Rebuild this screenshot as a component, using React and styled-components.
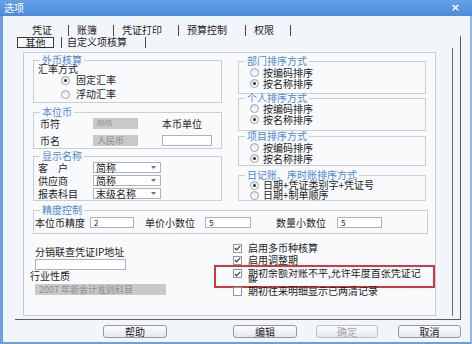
import React from 'react';
import styled, { createGlobalStyle } from 'styled-components';

const Global = createGlobalStyle`
  html, body { margin: 0; padding: 0; background: #ffffff; }
  body {
    font-family: "Noto Sans CJK SC", "Noto Sans", sans-serif;
    font-size: 10px;
    color: #1c1c1c;
  }
  * { box-sizing: border-box; }
`;

const Window = styled.div`
  width: 472px;
  height: 344px;
  display: flex;
  flex-direction: column;
  overflow: hidden;
`;

const TitleBar = styled.div`
  height: 16px;
  flex: none;
  display: flex;
  align-items: center;
  justify-content: space-between;
  padding: 0 12px 0 4px;
  background: linear-gradient(#64a1e6, #4a8ad9);
  color: #ffffff;
`;

const Title = styled.span`
  font-size: 10px;
  line-height: 10px;
`;

const Close = styled.span`
  font-family: "DejaVu Sans", sans-serif;
  font-size: 11px;
  font-weight: bold;
  line-height: 10px;
`;

const Body = styled.div`
  flex: 1;
  display: flex;
  flex-direction: column;
  background: #f2f5fa;
  border-left: 3px solid #6e9fdb;
  border-right: 2px solid #93b8e6;
  border-bottom: 2px solid #6e9fdb;
  padding-top: 8px;
`;

const TabRow = styled.div`
  display: flex;
  align-items: center;
  height: 12px;
  padding-left: ${p => p.$pl}px;
`;

const Tab = styled.span`
  padding: 0 ${p => p.$pr ?? 16}px 0 ${p => p.$pl ?? 8}px;
  line-height: 12px;
  white-space: nowrap;
`;

const TabSep = styled.span`
  width: 1px;
  height: 11px;
  background: #4a4a4a;
  margin-left: ${p => p.$ml || 0}px;
`;

const ActiveTab = styled.span`
  width: 37px;
  height: 11px;
  border: 1px solid #3c3c3c;
  background: #f8f9fb;
  display: flex;
  align-items: center;
  justify-content: center;
  line-height: 9px;
`;

const OuterPage = styled.div`
  margin-left: 12px;
  width: 446px;
  display: flex;
  flex-direction: column;
  border-right: 1px solid #5d5d5d;
  border-bottom: 1px solid #5d5d5d;
  padding: 0 7px 3px 0;
`;

const InnerPage = styled.div`
  border-right: 1px solid #6a6a6a;
  padding: 4px 16px 0 8px;
`;

const Panel = styled.div`
  height: 264px;
  border: 1px solid #c6ccd5;
  background: #f8fafc;
  padding-top: 1px;
  display: flex;
  flex-direction: column;
`;

const TopGrid = styled.div`
  display: grid;
  grid-template-columns: 189px 188px;
  column-gap: 16px;
  padding-left: 9px;
  align-items: start;
`;

const Column = styled.div`
  display: flex;
  flex-direction: column;
`;

const Group = styled.fieldset`
  margin: ${p => p.$mt || 0}px 0 0 ${p => p.$ml || 0}px;
  padding: 0 0 ${p => p.$pb || 0}px 0;
  border: 1px solid #c9ced6;
  min-width: 0;
`;

const Legend = styled.legend`
  padding: 0 2px;
  margin-left: 6px;
  font-size: 10px;
  line-height: 8px;
  color: #4f87d2;
`;

const PlainLine = styled.div`
  height: ${p => p.$h}px;
  line-height: ${p => p.$h}px;
  margin-top: ${p => p.$mt || 0}px;
  padding-left: ${p => p.$pl || 0}px;
  white-space: nowrap;
`;

const RadioRow = styled.div`
  display: flex;
  align-items: center;
  height: ${p => p.$h || 11}px;
  margin-top: ${p => p.$mt || 0}px;
  padding-left: ${p => p.$pl}px;
  gap: ${p => p.$gap || 4}px;
  white-space: nowrap;
  line-height: 10px;
`;

const Radio = styled.span`
  width: 9px;
  height: 9px;
  flex: none;
  border-radius: 50%;
  border: 1px solid #9aa4af;
  background: linear-gradient(#e3e7eb, #ffffff);
  display: flex;
  align-items: center;
  justify-content: center;
  &::after {
    content: '';
    width: 3px;
    height: 3px;
    border-radius: 50%;
    background: ${p => (p.$on ? '#2d3035' : 'transparent')};
  }
`;

const FieldRow = styled.div`
  display: flex;
  align-items: center;
  height: 11px;
  margin-top: ${p => p.$mt || 0}px;
  white-space: nowrap;
`;

const Label = styled.span`
  width: ${p => p.$w}px;
  flex: none;
  padding-left: ${p => p.$pl || 0}px;
  margin-left: ${p => p.$ml || 0}px;
  line-height: 11px;
`;

const GrayBox = styled.span`
  width: ${p => p.$w}px;
  height: 11px;
  flex: none;
  background: #c9c9c9;
  color: #8d8d8d;
  font-size: ${p => p.$fs || 9}px;
  line-height: 11px;
  padding-left: 4px;
  margin-left: ${p => p.$ml || 0}px;
  overflow: hidden;
  white-space: nowrap;
`;

const WhiteBox = styled.span`
  width: ${p => p.$w}px;
  height: 11px;
  flex: none;
  background: #ffffff;
  border: 1px solid #a9b2bd;
  font-size: 8px;
  line-height: 9px;
  padding-left: 3px;
  margin-left: ${p => p.$ml || 0}px;
`;

const SelectBox = styled.span`
  width: 68px;
  height: 11px;
  flex: none;
  background: #ffffff;
  border: 1px solid #aab3be;
  display: flex;
  align-items: center;
  justify-content: space-between;
  padding: 0 4px 0 2px;
  line-height: 9px;
`;

const PrecisionGroup = styled(Group)`
  margin-left: 9px;
  width: 395px;
`;

const BottomGrid = styled.div`
  display: grid;
  grid-template-columns: 209px 1fr;
  align-items: start;
`;

const Stack = styled.div`
  display: flex;
  flex-direction: column;
`;

const CheckRow = styled.div`
  position: relative;
  display: flex;
  align-items: ${p => (p.$wrap ? 'flex-start' : 'center')};
  height: ${p => p.$h || 12}px;
  margin-top: ${p => p.$mt || 0}px;
  gap: 6px;
  ${p =>
    p.$mark &&
    `
    &::after {
      content: '';
      position: absolute;
      left: -19px;
      top: -4px;
      width: 217px;
      height: 19px;
      border: 2px solid #d1393f;
      pointer-events: none;
    }
  `}
`;

const CheckBox = styled.span`
  width: 9px;
  height: 9px;
  flex: none;
  border: 1px solid #8f99a4;
  background: #ffffff;
  display: flex;
  align-items: center;
  justify-content: center;
`;

const CheckLabel = styled.span`
  line-height: 10px;
  white-space: nowrap;
`;

const WrapLabel = styled.span`
  line-height: 8px;
  width: 178px;
  height: 14px;
  overflow: hidden;
  word-break: break-all;
`;

const ButtonRow = styled.div`
  display: flex;
  margin-top: 5px;
  padding-left: 100px;
`;

const Button = styled.div`
  width: ${p => p.$w}px;
  height: 13px;
  margin-left: ${p => p.$ml || 0}px;
  border: 1px solid ${p => (p.$disabled ? '#b7c0ca' : '#8e9aa8')};
  border-radius: 3px;
  background: linear-gradient(#fcfcfc, #e5e8ec);
  color: ${p => (p.$disabled ? '#a4a8ad' : '#1c1c1c')};
  display: flex;
  align-items: center;
  justify-content: center;
  line-height: 11px;
`;

const Arrow = () => (
  <svg width="5" height="3" viewBox="0 0 5 3">
    <path d="M0 0 L5 0 L2.5 3 Z" fill="#6d737a" />
  </svg>
);

const Tick = () => (
  <svg width="7" height="6" viewBox="0 0 7 6">
    <path d="M0.8 3 L2.7 4.8 L6.2 0.9" fill="none" stroke="#3a3f45" strokeWidth="1.2" />
  </svg>
);

const Check = ({ on, wrap, children, ...rest }) => (
  <CheckRow $wrap={wrap} {...rest}>
    <CheckBox>{on && <Tick />}</CheckBox>
    {wrap ? <WrapLabel>{children}</WrapLabel> : <CheckLabel>{children}</CheckLabel>}
  </CheckRow>
);

const Select = ({ value }) => (
  <SelectBox>
    <span>{value}</span>
    <Arrow />
  </SelectBox>
);

const SortGroup = ({ title, first, second, on, mt, pb, rmt, h }) => (
  <Group $mt={mt} $pb={pb}>
    <Legend>{title}</Legend>
    <RadioRow $mt={rmt} $h={h} $pl={11}>
      <Radio $on={on === 0} />
      <span>{first}</span>
    </RadioRow>
    <RadioRow $h={h} $pl={11}>
      <Radio $on={on === 1} />
      <span>{second}</span>
    </RadioRow>
  </Group>
);

export default function App() {
  return (
    <>
      <Global />
      <Window>
        <TitleBar>
          <Title>选项</Title>
          <Close>×</Close>
        </TitleBar>
        <Body>
          <TabRow $pl={21}>
            <Tab>凭证</Tab>
            <TabSep />
            <Tab>账簿</Tab>
            <TabSep />
            <Tab>凭证打印</Tab>
            <TabSep />
            <Tab $pr={18}>预算控制</Tab>
            <TabSep />
            <Tab>权限</Tab>
            <TabSep />
          </TabRow>
          <OuterPage>
            <TabRow $pl={2}>
              <ActiveTab>其他</ActiveTab>
              <TabSep $ml={7} />
              <Tab $pl={5} $pr={18}>自定义项核算</Tab>
              <TabSep />
            </TabRow>
            <InnerPage>
              <Panel>
                <TopGrid>
                  <Column>
                    <Group $mt={2} $pb={2}>
                      <Legend>外币核算</Legend>
                      <PlainLine $h={9} $pl={4}>汇率方式</PlainLine>
                      <RadioRow $mt={1} $h={12} $pl={27} $gap={6}>
                        <Radio $on />
                        <span>固定汇率</span>
                      </RadioRow>
                      <RadioRow $mt={2} $h={12} $pl={27} $gap={6}>
                        <Radio />
                        <span>浮动汇率</span>
                      </RadioRow>
                    </Group>
                    <Group $mt={5} $pb={2}>
                      <Legend>本位币</Legend>
                      <FieldRow $mt={2}>
                        <Label $w={59} $pl={6}>币符</Label>
                        <GrayBox $w={45} $fs={7}>RMB</GrayBox>
                        <Label $w={50} $ml={24}>本币单位</Label>
                      </FieldRow>
                      <FieldRow $mt={6}>
                        <Label $w={59} $pl={6}>币名</Label>
                        <GrayBox $w={45}>人民币</GrayBox>
                        <WhiteBox $w={50} $ml={24} />
                      </FieldRow>
                    </Group>
                    <Group $mt={3} $pb={1}>
                      <Legend>显示名称</Legend>
                      <FieldRow $mt={2}>
                        <Label $w={59} $pl={4}>客　户</Label>
                        <Select value="简称" />
                      </FieldRow>
                      <FieldRow $mt={2}>
                        <Label $w={59} $pl={4}>供应商</Label>
                        <Select value="简称" />
                      </FieldRow>
                      <FieldRow $mt={2}>
                        <Label $w={59} $pl={4}>报表科目</Label>
                        <Select value="末级名称" />
                      </FieldRow>
                    </Group>
                  </Column>
                  <Column>
                    <SortGroup title="部门排序方式" first="按编码排序" second="按名称排序" on={1} mt={3} pb={4} rmt={2} />
                    <SortGroup title="个人排序方式" first="按编码排序" second="按名称排序" on={1} mt={0} pb={5} rmt={1} />
                    <SortGroup title="项目排序方式" first="按编码排序" second="按名称排序" on={1} mt={1} pb={1} rmt={2} />
                    <SortGroup
                      title="日记账、序时账排序方式"
                      first="日期+凭证类别字+凭证号"
                      second="日期+制单顺序"
                      on={0}
                      mt={5}
                      pb={0}
                      rmt={1}
                      h={10}
                    />
                  </Column>
                </TopGrid>
                <PrecisionGroup $mt={5} $pb={5}>
                  <Legend>精度控制</Legend>
                  <FieldRow $mt={3}>
                    <Label $w={56} $pl={1}>本位币精度</Label>
                    <WhiteBox $w={44}>2</WhiteBox>
                    <Label $w={60} $ml={11}>单价小数位</Label>
                    <WhiteBox $w={46}>5</WhiteBox>
                    <Label $w={61} $ml={25}>数量小数位</Label>
                    <WhiteBox $w={45}>5</WhiteBox>
                  </FieldRow>
                </PrecisionGroup>
                <BottomGrid>
                  <Stack>
                    <PlainLine $h={12} $mt={12} $pl={11}>分销联查凭证IP地址</PlainLine>
                    <FieldRow $mt={1}>
                      <WhiteBox $w={91} $ml={11} />
                    </FieldRow>
                    <PlainLine $h={10} $mt={1} $pl={6}>行业性质</PlainLine>
                    <FieldRow $mt={3}>
                      <GrayBox $w={131} $ml={11}>2007 年新会计准则科目</GrayBox>
                    </FieldRow>
                  </Stack>
                  <Stack>
                    <Check on $mt={8}>启用多币种核算</Check>
                    <Check on>启用调整期</Check>
                    <Check on wrap $mt={3} $h={14} $mark>
                      期初余额对账不平,允许年度首张凭证记账
                    </Check>
                    <Check $mt={2}>期初往来明细显示已两清记录</Check>
                  </Stack>
                </BottomGrid>
              </Panel>
            </InnerPage>
          </OuterPage>
          <ButtonRow>
            <Button $w={64}>帮助</Button>
            <Button $w={64} $ml={66}>编辑</Button>
            <Button $w={62} $ml={19} $disabled>确定</Button>
            <Button $w={63} $ml={20}>取消</Button>
          </ButtonRow>
        </Body>
      </Window>
    </>
  );
}
